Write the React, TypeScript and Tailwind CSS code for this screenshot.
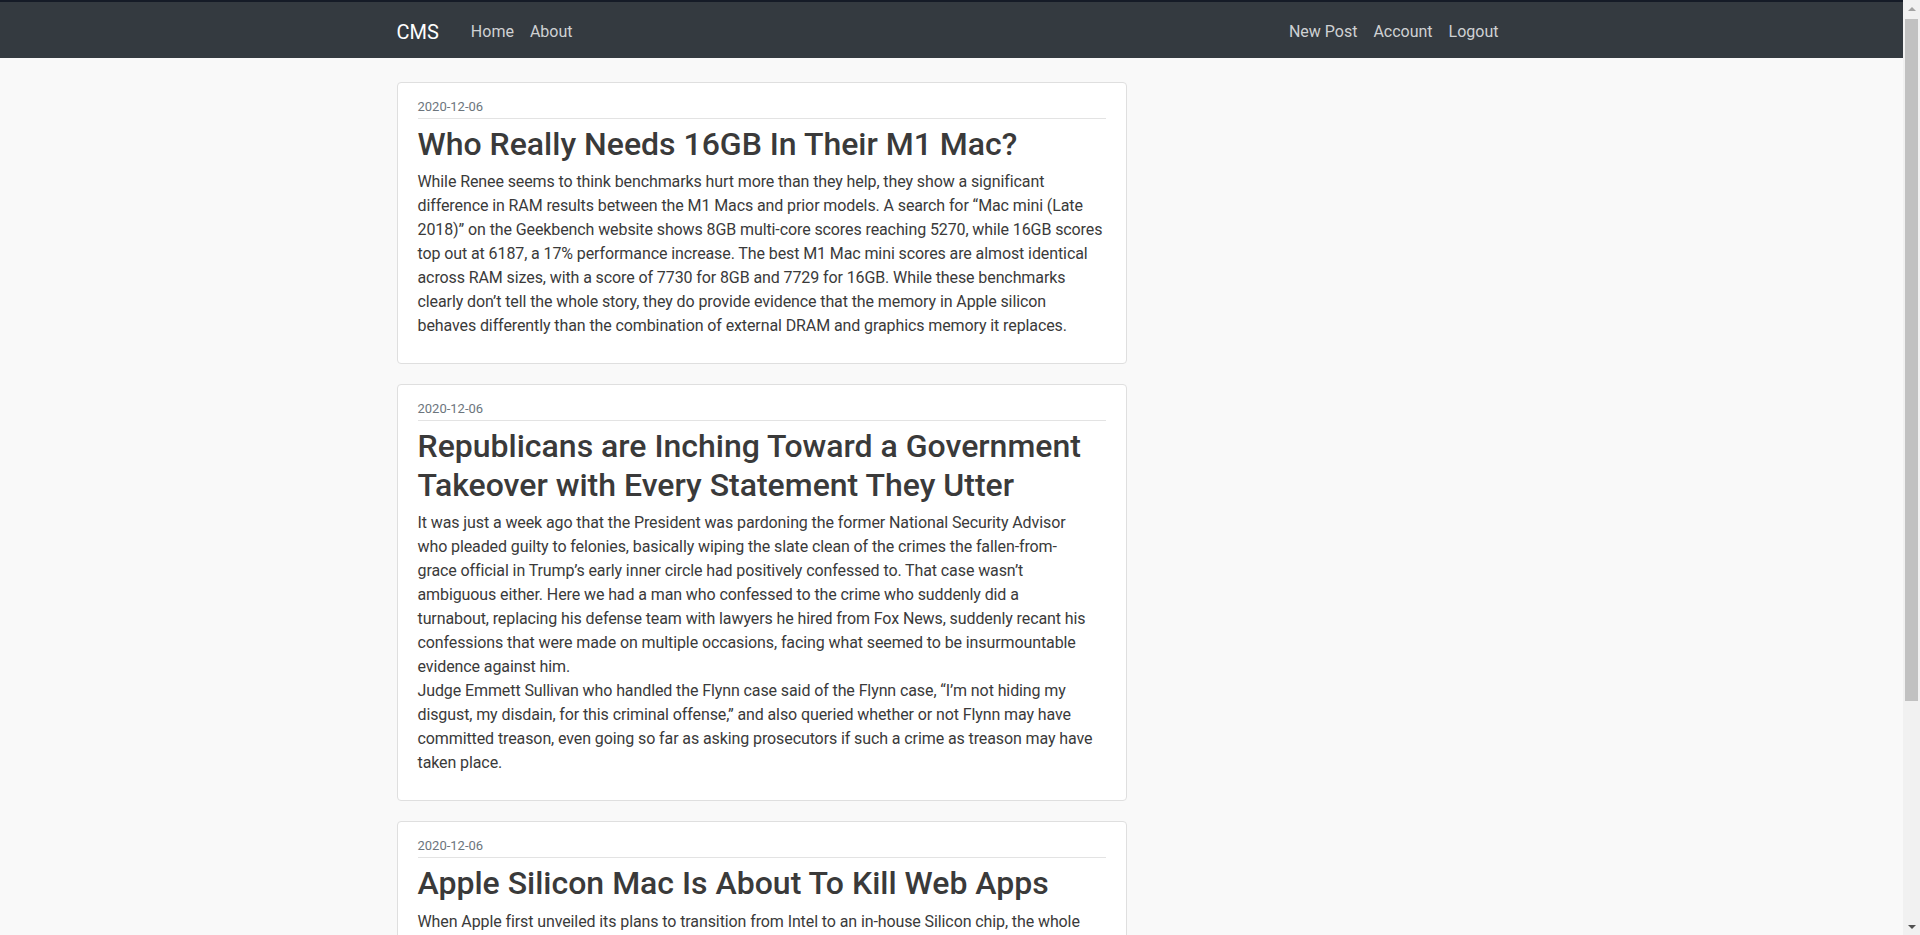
import React from "react";

interface Post {
  id: number;
  date: string;
  title: string;
  // each paragraph is kept as the lines it breaks into on the page
  body: string[][];
}

const posts: Post[] = [
  {
    id: 1,
    date: "2020-12-06",
    title: "Who Really Needs 16GB In Their M1 Mac?",
    body: [
      [
        "While Renee seems to think benchmarks hurt more than they help, they show a significant",
        "difference in RAM results between the M1 Macs and prior models. A search for “Mac mini (Late",
        "2018)” on the Geekbench website shows 8GB multi-core scores reaching 5270, while 16GB scores",
        "top out at 6187, a 17% performance increase. The best M1 Mac mini scores are almost identical",
        "across RAM sizes, with a score of 7730 for 8GB and 7729 for 16GB. While these benchmarks",
        "clearly don’t tell the whole story, they do provide evidence that the memory in Apple silicon",
        "behaves differently than the combination of external DRAM and graphics memory it replaces.",
      ],
    ],
  },
  {
    id: 2,
    date: "2020-12-06",
    title:
      "Republicans are Inching Toward a Government Takeover with Every Statement They Utter",
    body: [
      [
        "It was just a week ago that the President was pardoning the former National Security Advisor",
        "who pleaded guilty to felonies, basically wiping the slate clean of the crimes the fallen-from-",
        "grace official in Trump’s early inner circle had positively confessed to. That case wasn’t",
        "ambiguous either. Here we had a man who confessed to the crime who suddenly did a",
        "turnabout, replacing his defense team with lawyers he hired from Fox News, suddenly recant his",
        "confessions that were made on multiple occasions, facing what seemed to be insurmountable",
        "evidence against him.",
      ],
      [
        "Judge Emmett Sullivan who handled the Flynn case said of the Flynn case, “I’m not hiding my",
        "disgust, my disdain, for this criminal offense,” and also queried whether or not Flynn may have",
        "committed treason, even going so far as asking prosecutors if such a crime as treason may have",
        "taken place.",
      ],
    ],
  },
  {
    id: 3,
    date: "2020-12-06",
    title: "Apple Silicon Mac Is About To Kill Web Apps",
    body: [
      [
        "When Apple first unveiled its plans to transition from Intel to an in-house Silicon chip, the whole",
        "industry wondered what it would mean for the software people use every day. Now that the first",
        "machines are shipping, one thing is becoming clear: native iPhone and iPad apps can run on the",
        "Mac without any changes at all. For years, companies have leaned on web wrappers and browser-",
        "based tools because building a separate desktop client was simply too expensive. With the same",
        "binaries running on every Apple device, that argument falls apart.",
      ],
    ],
  },
];

const PostCard: React.FC<{ post: Post }> = ({ post }) => (
  <div className="bg-white border border-[#dfdfdf] rounded-[4px] px-5 pt-[14px] pb-[25px] mb-[20px]">
    <div className="text-[13px] leading-[20px] text-[#6c757d] pb-[1px] border-b border-[#e3e3e3]">
      {post.date}
    </div>
    <h2 className="mt-[6px] mb-[7px] text-[32px] leading-[1.2] font-medium text-[#3a3a3a]">
      {post.title}
    </h2>
    {post.body.map((lines, i) => (
      <p
        key={i}
        className="text-[16px] leading-[24px] tracking-[-0.1px] whitespace-nowrap text-[#3a3a3a]"
      >
        {lines.map((line, j) => (
          <React.Fragment key={j}>
            {j > 0 && <br />}
            {line}
          </React.Fragment>
        ))}
      </p>
    ))}
  </div>
);

// fake classic scrollbar, the page was captured with one on the right
const Scrollbar = () => (
  <div className="w-[17px] h-[935px] shrink-0 bg-[#f1f1f1] flex flex-col">
    <div className="h-[17px] flex items-center justify-center">
      <div className="w-0 h-0 border-x-[4px] border-x-transparent border-b-[4px] border-b-[#a3a3a3]" />
    </div>
    <div className="px-[2px] mt-[2px]">
      <div className="h-[682px] bg-[#c1c1c1]" />
    </div>
    <div className="flex-1" />
    <div className="h-[17px] flex items-center justify-center">
      <div className="w-0 h-0 border-x-[4px] border-x-transparent border-t-[4px] border-t-[#505050]" />
    </div>
  </div>
);

export default function App() {
  return (
    <div className="flex h-screen overflow-hidden bg-[#f9f9f9] font-[Roboto,'Liberation_Sans',sans-serif]">
      <div className="flex-1 min-w-0">
        <div className="h-[2px] bg-[#151b27]" />
        <nav className="bg-[#343a40] h-[56px]">
          <div className="w-[1140px] mx-auto px-[15px] pt-1 h-full flex items-center">
            <a className="text-white text-[20px] leading-[30px] mr-6">CMS</a>
            <div className="flex items-center text-[16px] leading-[24px] text-[#cfd1d3]">
              <a className="px-2">Home</a>
              <a className="px-2">About</a>
            </div>
            <div className="ml-auto flex items-center text-[16px] leading-[24px] text-[#cfd1d3]">
              <a className="px-2">New Post</a>
              <a className="px-2">Account</a>
              <a className="px-2">Logout</a>
            </div>
          </div>
        </nav>
        <main className="w-[1140px] mx-auto px-[15px] pt-6 pb-6">
          <div className="w-[730px]">
            {posts.map((post) => (
              <PostCard key={post.id} post={post} />
            ))}
          </div>
        </main>
      </div>
      <Scrollbar />
    </div>
  );
}
